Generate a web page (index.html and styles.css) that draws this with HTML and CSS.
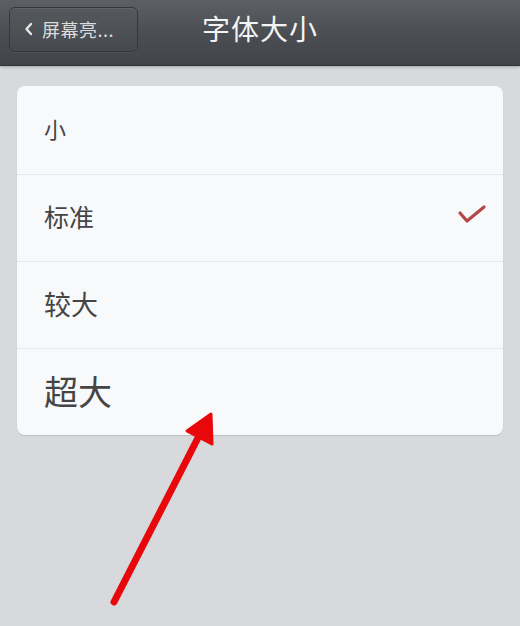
FILE: index.html
```html
<!DOCTYPE html>
<html>
<head>
<meta charset="utf-8">
<link rel="stylesheet" href="styles.css">
</head>
<body>
<div class="screen">
  <header class="navbar">
    <button class="back">
      <svg class="chev" width="10" height="14" viewBox="0 0 10 14"><path d="M7 2 L2.5 7 L7 12" fill="none" stroke="#e6e6e6" stroke-width="2.4" stroke-linecap="round" stroke-linejoin="round"/></svg>
      <span>屏幕亮...</span>
    </button>
    <h1 class="title">字体大小</h1>
  </header>
  <main class="content">
    <ul class="card">
      <li class="row"><span class="s1">小</span></li>
      <li class="row"><span class="s2">标准</span>
        <svg class="check" width="30" height="24" viewBox="0 0 30 24"><path d="M3 9 L10 17 L27 3" fill="none" stroke="#b3484a" stroke-width="3.2" stroke-linecap="round" stroke-linejoin="round"/></svg>
      </li>
      <li class="row"><span class="s3">较大</span></li>
      <li class="row"><span class="s4">超大</span></li>
    </ul>
    <svg class="arrow" width="520" height="626" viewBox="0 0 520 626">
      <line x1="114" y1="602" x2="201" y2="432" stroke="#e8080c" stroke-width="7" stroke-linecap="round"/>
      <polygon points="211,414 212,444 187,431" fill="#e8080c" stroke="#e8080c" stroke-width="3" stroke-linejoin="round"/>
    </svg>
  </main>
</div>
</body>
</html>
```
FILE: styles.css
```css
* { box-sizing: border-box; }
html, body { margin: 0; padding: 0; }
body {
  width: 520px;
  height: 626px;
  overflow: hidden;
  font-family: "Noto Sans CJK SC", "Noto Sans", sans-serif;
  background: #d7d9dc;
}
.screen { position: relative; width: 520px; height: 626px; }
.navbar {
  height: 66px;
  display: flex;
  align-items: center;
  padding: 0 9px;
  background: linear-gradient(#5c5f63, #4b4e52 50%, #414448);
  border-bottom: 1px solid #2e3033;
  box-shadow: 0 1px 3px rgba(0,0,0,0.25);
  position: relative;
}
.back {
  height: 45px;
  width: 129px;
  margin-top: -7px;
  display: flex;
  align-items: center;
  gap: 8px;
  padding: 0 0 0 14px;
  border: 1px solid #35383b;
  border-radius: 6px;
  background: linear-gradient(#55585c, #46494d);
  box-shadow: inset 0 1px 0 rgba(255,255,255,0.08), 0 1px 0 rgba(255,255,255,0.06);
  color: #dcdcdc;
  font-family: inherit;
  font-size: 18px;
  letter-spacing: 0.5px;
}
.chev { flex: none; }
.title {
  position: absolute;
  left: 0; right: 0; top: 8px;
  margin: 0;
  text-align: center;
  color: #f4f4f4;
  font-size: 28px;
  font-weight: 400;
  letter-spacing: 1px;
  pointer-events: none;
}
.content { padding: 20px 17px 0 17px; }
.card {
  list-style: none;
  margin: 0;
  padding: 0;
  background: #f8f9fa;
  border-radius: 8px;
  box-shadow: 0 1px 1px rgba(0,0,0,0.12);
}
.row {
  height: 87px;
  display: flex;
  align-items: center;
  justify-content: space-between;
  padding: 0 16px 4px 27px;
  border-top: 1px solid #e6e8ea;
  color: #454545;
}
.row:first-child { border-top: none; height: 88px; }
.s1 { font-size: 22px; }
.s2 { font-size: 25px; }
.s3 { font-size: 27px; }
.s4 { font-size: 34px; }
.check { margin-right: 0; }
.arrow { position: absolute; left: 0; top: 0; pointer-events: none; }
```
